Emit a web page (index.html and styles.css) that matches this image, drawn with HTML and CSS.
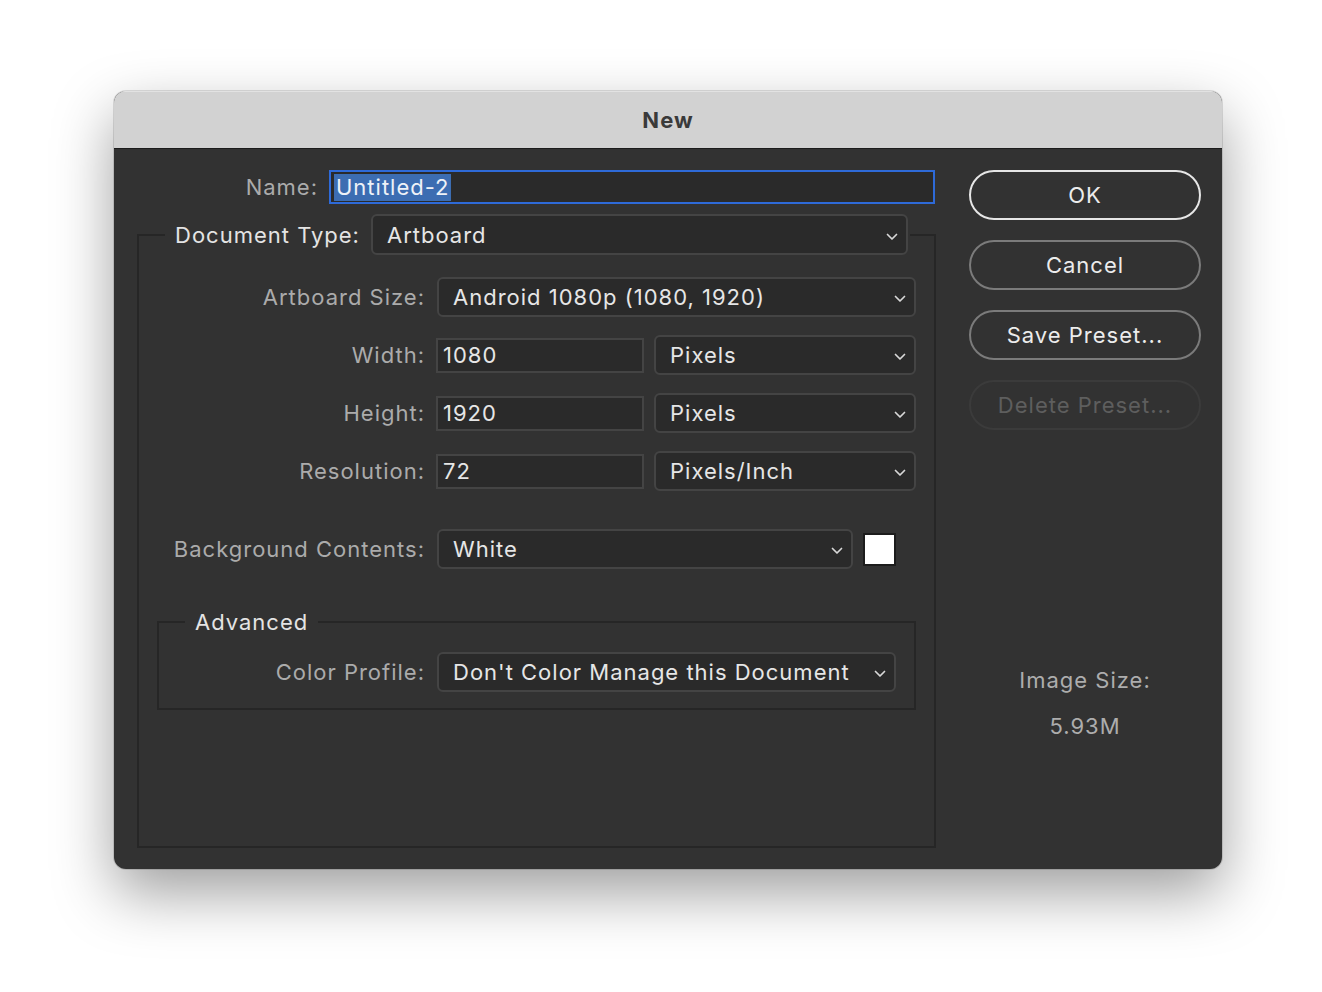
FILE: index.html
```html
<!DOCTYPE html>
<html>
<head>
<meta charset="utf-8">
<link rel="stylesheet" href="styles.css">
</head>
<body>
<div class="stage">
  <div class="window">
    <div class="titlebar">New</div>
    <div class="content">
      <div class="main">
        <div class="name-row">
          <span class="label">Name:</span>
          <div class="name-input"><span class="sel">Untitled-2</span></div>
        </div>
        <fieldset class="group doc">
          <legend class="doc-legend">
            <span class="legend-text">Document Type:</span>
            <div class="select doc-select"><span>Artboard</span><svg class="chev" viewBox="0 0 12 8"><path d="M1.5 1.5 L6 6 L10.5 1.5"/></svg></div>
          </legend>
          <div class="rows">
            <div class="row">
              <span class="label">Artboard Size:</span>
              <div class="select w-full"><span>Android 1080p (1080, 1920)</span><svg class="chev" viewBox="0 0 12 8"><path d="M1.5 1.5 L6 6 L10.5 1.5"/></svg></div>
            </div>
            <div class="row">
              <span class="label">Width:</span>
              <div class="field">1080</div>
              <div class="select w-unit"><span>Pixels</span><svg class="chev" viewBox="0 0 12 8"><path d="M1.5 1.5 L6 6 L10.5 1.5"/></svg></div>
            </div>
            <div class="row">
              <span class="label">Height:</span>
              <div class="field">1920</div>
              <div class="select w-unit"><span>Pixels</span><svg class="chev" viewBox="0 0 12 8"><path d="M1.5 1.5 L6 6 L10.5 1.5"/></svg></div>
            </div>
            <div class="row">
              <span class="label">Resolution:</span>
              <div class="field">72</div>
              <div class="select w-unit"><span>Pixels/Inch</span><svg class="chev" viewBox="0 0 12 8"><path d="M1.5 1.5 L6 6 L10.5 1.5"/></svg></div>
            </div>
            <div class="row bg-row">
              <span class="label">Background Contents:</span>
              <div class="select w-bg"><span>White</span><svg class="chev" viewBox="0 0 12 8"><path d="M1.5 1.5 L6 6 L10.5 1.5"/></svg></div>
              <div class="swatch"></div>
            </div>
          </div>
          <fieldset class="group adv">
            <legend class="adv-legend">Advanced</legend>
            <div class="row adv-row">
              <span class="label">Color Profile:</span>
              <div class="select w-prof"><span>Don't Color Manage this Document</span><svg class="chev" viewBox="0 0 12 8"><path d="M1.5 1.5 L6 6 L10.5 1.5"/></svg></div>
            </div>
          </fieldset>
        </fieldset>
      </div>
      <div class="side">
        <div class="btn ok">OK</div>
        <div class="btn">Cancel</div>
        <div class="btn">Save Preset...</div>
        <div class="btn disabled">Delete Preset...</div>
        <div class="info">
          <div>Image Size:</div>
          <div class="size">5.93M</div>
        </div>
      </div>
    </div>
  </div>
</div>
</body>
</html>
```
FILE: styles.css
```css
html, body {
  margin: 0;
  padding: 0;
  background: #ffffff;
}
body {
  font-family: Inter, "Noto Sans", "Liberation Sans", sans-serif;
  font-size: 22px;
  letter-spacing: 1px;
  -webkit-font-smoothing: antialiased;
}
.stage {
  padding: 91px 0 0 114px;
  height: 992px;
  box-sizing: border-box;
}
.window {
  width: 1108px;
  height: 778px;
  border-radius: 12px;
  overflow: hidden;
  background: #323232;
  box-shadow: 0 24px 60px rgba(0,0,0,0.38), 0 0 0 1px rgba(0,0,0,0.12);
  display: flex;
  flex-direction: column;
}
.titlebar {
  flex: none;
  background: #d2d2d2;
  border-top: 1px solid #e2e2e2;
  border-bottom: 1px solid #1c1c1c;
  box-sizing: content-box;
  display: flex;
  align-items: center;
  justify-content: center;
  font-weight: 700;
  font-size: 22px;
  color: #3a3a3a;
  height: 56px;
  padding-bottom: 0;
}
.content {
  flex: 1;
  display: flex;
  padding: 21px 21px 21px 23px;
  gap: 33px;
  min-height: 0;
}
.main {
  width: 799px;
  display: flex;
  flex-direction: column;
}
.label {
  color: #ababab;
  text-align: right;
  white-space: nowrap;
}
.name-row {
  display: flex;
  align-items: center;
  height: 34px;
  margin-bottom: 10px;
}
.name-row .label {
  width: 181px;
  flex: none;
}
.name-input {
  margin-left: 11px;
  width: 606px;
  height: 34px;
  box-sizing: border-box;
  border: 2px solid #2e6ad8;
  background: #2a2a2a;
  display: flex;
  align-items: center;
  padding-left: 3px;
}
.sel {
  background: #3c6db2;
  color: #eef2f8;
  line-height: 27px;
  padding: 0 1px 0 2px;
}
.group {
  margin: 0;
  border: 2px solid #262626;
  min-width: 0;
}
.doc {
  flex: 1;
  padding: 0;
}
.doc-legend {
  margin-left: 26px;
  padding: 0 2px 0 10px;
  display: flex;
  align-items: center;
  gap: 11px;
}
.legend-text {
  color: #e4e4e4;
}
.select {
  height: 40px;
  box-sizing: border-box;
  border: 2px solid #444444;
  border-radius: 6px;
  background: #2a2a2a;
  color: #e6e6e6;
  display: flex;
  align-items: center;
  justify-content: space-between;
  padding: 0 8px 0 14px;
  flex: none;
}
.doc-select {
  width: 537px;
  height: 41px;
}
.chev {
  width: 12px;
  height: 8px;
  margin-top: 4px;
  fill: none;
  stroke: #d8d8d8;
  stroke-width: 1.7;
  stroke-linecap: round;
  stroke-linejoin: round;
}
.rows {
  display: flex;
  flex-direction: column;
  gap: 18px;
  padding-top: 22px;
}
.row {
  display: flex;
  align-items: center;
  height: 40px;
}
.rows .row .label {
  width: 286px;
  flex: none;
  margin-right: 12px;
}
.w-full { width: 479px; }
.field {
  width: 208px;
  height: 35px;
  box-sizing: border-box;
  border: 2px solid #444444;
  background: #2a2a2a;
  color: #e6e6e6;
  display: flex;
  align-items: center;
  padding-left: 5px;
  margin-left: -1px;
  margin-right: 10px;
  flex: none;
}
.w-unit { width: 262px; }
.bg-row { margin-top: 20px; }
.w-bg { width: 416px; }
.swatch {
  width: 33px;
  height: 33px;
  box-sizing: border-box;
  border: 2px solid #1c1c1c;
  background: #ffffff;
  margin-left: 10px;
}
.adv {
  margin: 40px 18px 0 18px;
  padding: 0 0 16px 0;
}
.adv-legend {
  margin-left: 26px;
  padding: 0 10px;
  color: #e4e4e4;
  line-height: 26px;
}
.adv-row {
  margin-top: 17px;
}
.adv-row .label {
  width: 266px;
  flex: none;
  margin-right: 12px;
}
.w-prof { width: 459px; }
.side {
  width: 232px;
  display: flex;
  flex-direction: column;
  gap: 20px;
}
.btn {
  height: 50px;
  box-sizing: border-box;
  border: 2px solid #7b7b7b;
  border-radius: 25px;
  display: flex;
  align-items: center;
  justify-content: center;
  color: #ececec;
  flex: none;
}
.btn.ok {
  border-color: #e6e6e6;
}
.btn.disabled {
  border-color: #3b3b3b;
  color: #5e5e5e;
}
.info {
  margin-top: 217px;
  text-align: center;
  color: #adadad;
  line-height: 26px;
}
.info .size {
  margin-top: 20px;
}
```
